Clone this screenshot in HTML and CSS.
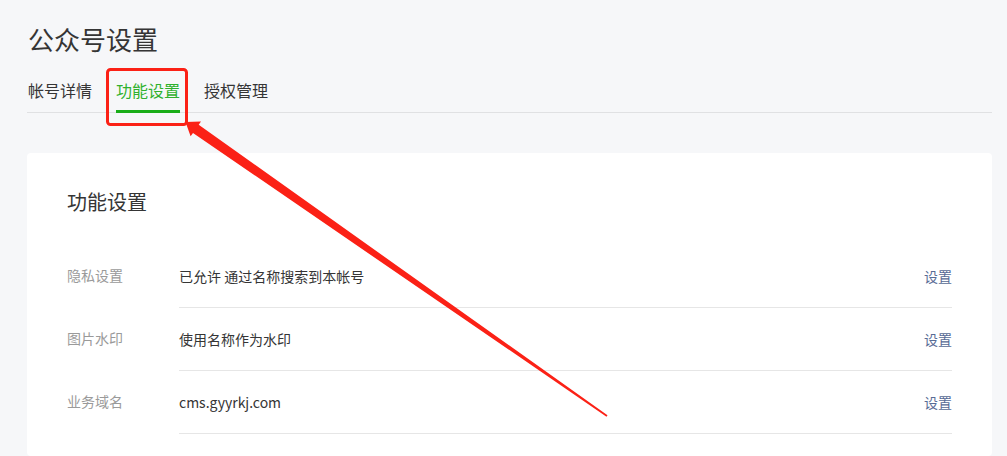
FILE: index.html
```html
<!DOCTYPE html>
<html lang="zh-CN">
<head>
<meta charset="utf-8">
<title>公众号设置</title>
<link rel="stylesheet" href="styles.css">
</head>
<body>
<div class="page">
  <h1 class="title">公众号设置</h1>
  <nav class="tabs">
    <a class="tab">帐号详情</a>
    <a class="tab active">功能设置</a>
    <a class="tab">授权管理</a>
  </nav>
  <section class="card">
    <h2 class="card-title">功能设置</h2>
    <div class="row">
      <div class="label">隐私设置</div>
      <div class="body"><span class="value">已允许 通过名称搜索到本帐号</span><a class="action">设置</a></div>
    </div>
    <div class="row">
      <div class="label">图片水印</div>
      <div class="body"><span class="value">使用名称作为水印</span><a class="action">设置</a></div>
    </div>
    <div class="row">
      <div class="label">业务域名</div>
      <div class="body"><span class="value">cms.gyyrkj.com</span><a class="action">设置</a></div>
    </div>
  </section>
</div>
<svg class="annot" width="1007" height="456" viewBox="0 0 1007 456">
  <rect x="107.5" y="69.5" width="79" height="55" rx="3" fill="none" stroke="#fb2116" stroke-width="3"/>
  <polygon fill="#fb2116" points="185.5,122 201,121.5 198.7,124.8 607.5,415.3 606.5,416.7 193,133 190.6,136.2"/>
</svg>
</body>
</html>
```
FILE: styles.css
```css
html, body {
  margin: 0;
  padding: 0;
  background: #f6f7f9;
}
body {
  font-family: "Noto Sans CJK SC", "Noto Sans", sans-serif;
  color: #353535;
  width: 1007px;
  height: 456px;
  overflow: hidden;
  position: relative;
}
.page {
  padding: 20px 15px 0 27px;
}
.title {
  margin: 0;
  font-size: 26px;
  font-weight: 400;
  line-height: 38px;
  padding-left: 1px;
}
.tabs {
  display: flex;
  gap: 24px;
  margin-top: 19px;
  border-bottom: 1px solid #e0e1e3;
  padding-left: 1px;
}
.tab {
  font-size: 16px;
  line-height: 24px;
  padding-top: 1px;
  padding-bottom: 8px;
  margin-bottom: -1px;
  border-bottom: 3px solid transparent;
  color: #353535;
  cursor: pointer;
}
.tab.active {
  color: #2fb12d;
  border-bottom-color: #1aad19;
}
.card {
  margin-top: 40px;
  background: #fff;
  border-radius: 4px;
  padding: 34px 40px 0 40px;
  height: 269px;
  overflow: hidden;
}
.card-title {
  margin: 0 0 28px;
  font-size: 20px;
  font-weight: 400;
  line-height: 30px;
}
.row {
  display: flex;
  font-size: 14px;
}
.label {
  width: 112px;
  flex: none;
  color: #9a9a9a;
  line-height: 61px;
}
.body {
  flex: 1;
  display: flex;
  justify-content: space-between;
  align-items: center;
  height: 61px;
  padding-bottom: 1px;
  border-bottom: 1px solid #e6e6e6;
}
.action {
  color: #576b95;
  cursor: pointer;
}
.annot {
  position: absolute;
  left: 0;
  top: 0;
  pointer-events: none;
}
```
